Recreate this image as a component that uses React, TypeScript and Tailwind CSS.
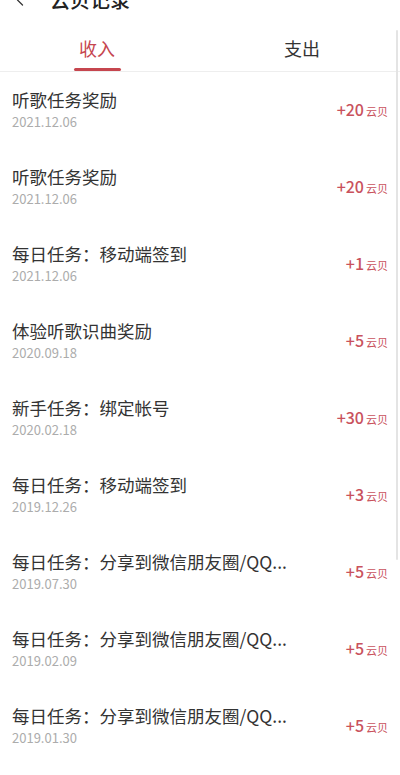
import { ChevronLeft } from "lucide-react";

type Record = {
  title: string;
  date: string;
  amount: number;
};

const records: Record[] = [
  { title: "听歌任务奖励", date: "2021.12.06", amount: 20 },
  { title: "听歌任务奖励", date: "2021.12.06", amount: 20 },
  { title: "每日任务：移动端签到", date: "2021.12.06", amount: 1 },
  { title: "体验听歌识曲奖励", date: "2020.09.18", amount: 5 },
  { title: "新手任务：绑定帐号", date: "2020.02.18", amount: 30 },
  { title: "每日任务：移动端签到", date: "2019.12.26", amount: 3 },
  { title: "每日任务：分享到微信朋友圈/QQ...", date: "2019.07.30", amount: 5 },
  { title: "每日任务：分享到微信朋友圈/QQ...", date: "2019.02.09", amount: 5 },
  { title: "每日任务：分享到微信朋友圈/QQ...", date: "2019.01.30", amount: 5 },
];

const RecordRow = ({ item }: { item: Record }) => {
  return (
    <div className="flex h-[77px] items-start justify-between pl-[12px] pr-[12px] pt-[15px]">
      <div className="flex flex-col">
        <p className="text-[17.5px] leading-[25px] text-[#333333]">{item.title}</p>
        <p className="text-[13px] leading-[19px] text-[#acacac]">{item.date}</p>
      </div>
      <div className="mt-[10px] flex items-baseline text-[#c9525d]">
        <span className="text-[16px] font-medium leading-[24px]">+{item.amount}</span>
        <span className="ml-[2px] text-[11px]">云贝</span>
      </div>
    </div>
  );
};

export default function App() {
  return (
    <div
      className="relative h-[775px] w-[400px] overflow-hidden bg-white"
      style={{ fontFamily: '"Noto Sans CJK SC", "Noto Sans", sans-serif' }}
    >
      {/* header, cut off by the top of the screen */}
      <div className="-mt-[13px] flex h-[26px] items-center pl-[10px]">
        <ChevronLeft className="h-[20px] w-[20px] text-[#333333]" strokeWidth={1.5} />
        <span className="ml-[20px] text-[20px] font-medium text-[#222222]">云贝记录</span>
      </div>

      {/* tabs */}
      <div className="grid h-[59px] grid-cols-2 border-b border-[#eeeeee]">
        <div className="flex flex-col items-center justify-end pr-[6px]">
          <span className="text-[18px] leading-[24px] text-[#c6464f]">收入</span>
          <div className="mt-[8px] h-[3px] w-[47px] rounded-full bg-[#c6464f]" />
        </div>
        <div className="flex flex-col items-center justify-end pl-[4px]">
          <span className="text-[18px] leading-[24px] text-[#333333]">支出</span>
          <div className="mt-[8px] h-[3px]" />
        </div>
      </div>

      <div className="flex flex-col">
        {records.map((item, i) => (
          <RecordRow key={i} item={item} />
        ))}
      </div>

      {/* scrollbar */}
      <div className="absolute right-[2px] top-[30px] h-[530px] w-[2px] rounded-full bg-[#e4e4e4]" />
    </div>
  );
}
